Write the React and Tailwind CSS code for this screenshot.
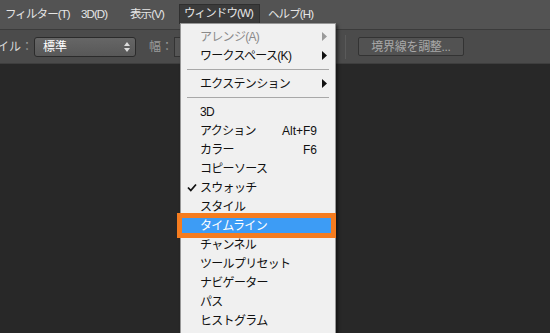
import React from "react";

const font = { fontFamily: '"Liberation Sans", "Noto Sans CJK JP", sans-serif' };

const menuBar = [
  { label: "フィルター(T)", w: "w-[76px]", pl: "pl-[5px]" },
  { label: "3D(D)", w: "w-[49px]", pl: "pl-[5px]" },
  { label: "表示(V)", w: "w-[54px]", pl: "pl-[5px]" },
  { label: "ウィンドウ(W)", w: "w-[81px]", pl: "pl-0", active: true },
  { label: "ヘルプ(H)", w: "w-[80px]", pl: "pl-[8px]" },
];

const Arrow = ({ gray }) => (
  <svg width="5" height="9" viewBox="0 0 5 9" className="mr-[8px]">
    <path d="M0 0 L5 4.5 L0 9 Z" fill={gray ? "#9a9a9a" : "#111"} />
  </svg>
);

const Check = () => (
  <svg width="10" height="9" viewBox="0 0 10 9" className="absolute left-[6px] top-[5px]">
    <path d="M1 4.5 L3.8 7.5 L9 1.5" stroke="#111" strokeWidth="1.8" fill="none" />
  </svg>
);

const Row = ({ label, shortcut, arrow, disabled, checked, selected }) => (
  <div
    className={
      "relative h-[19px] flex items-center justify-between pl-[19px] text-[12px] tracking-[-0.7px] whitespace-nowrap " +
      (selected ? "text-white" : disabled ? "text-[#8a8a8a]" : "text-[#111]")
    }
  >
    {checked && <Check />}
    <span>{label}</span>
    {shortcut && <span className="mr-[18px] tracking-normal">{shortcut}</span>}
    {arrow && <Arrow gray={disabled} />}
  </div>
);

const Sep = () => (
  <div className="h-[9px] flex items-center px-[6px]">
    <div className="h-px w-full bg-[#a8a8a8]" />
  </div>
);

export default function App() {
  return (
    <div
      className="relative w-[550px] h-[333px] overflow-hidden bg-[#282828]"
      style={font}
    >
      {/* menu bar */}
      <div className="h-[30px] bg-[#535353] border-b border-[#3b3b3b] flex items-center text-[11.5px] text-[#e6e6e6] tracking-[-0.9px] whitespace-nowrap">
        {menuBar.map((m) => (
          <div key={m.label} className={m.w + " " + m.pl + " shrink-0 h-[30px] flex items-center"}>
            {m.active ? (
              <div className="h-[20px] mt-[-2px] w-full bg-[#3b3b3b] border border-[#2f2f2f] flex items-center pl-[4px]">
                {m.label}
              </div>
            ) : (
              m.label
            )}
          </div>
        ))}
      </div>

      {/* options bar */}
      <div className="h-[34px] bg-[#4b4b4b] border-b border-[#3e3e3e] flex items-center text-[12px] whitespace-nowrap">
        <span className="text-[#d8d8d8] ml-[-3px] w-[37px] shrink-0">
          イル<span className="text-[#9a9a9a]">：</span>
        </span>
        <div className="w-[102px] shrink-0 h-[20px] rounded-[3px] border border-[#2b2b2b] bg-gradient-to-b from-[#666] to-[#585858] flex items-center justify-between pl-[8px] pr-[5px] text-white">
          <span>標準</span>
          <svg width="6" height="10" viewBox="0 0 6 10">
            <path d="M0 4 L3 0 L6 4 Z M0 6 L3 10 L6 6 Z" fill="#ddd" />
          </svg>
        </div>
        <span className="ml-[13px] text-[#9a9a9a] w-[25px] shrink-0">幅：</span>
        <div className="w-[20px] h-[20px] shrink-0 border border-[#333] bg-[#555]" />
        <div className="ml-[151px] w-px h-[24px] shrink-0 bg-[#333] border-r border-[#5a5a5a]" />
        <div className="ml-[12px] w-[106px] h-[19px] shrink-0 rounded-[2px] border border-[#333] bg-[#525252] flex items-center justify-center text-[#a8a8a8] tracking-[-0.3px]">
          境界線を調整...
        </div>
      </div>

      {/* dropdown */}
      <div className="absolute left-[180px] top-[23px] w-[156px] bottom-[-2px] bg-[#f0f0f0] border border-[#979797] shadow-[2px_2px_3px_rgba(0,0,0,0.5)] pt-[3px]">
        <Row label="アレンジ(A)" arrow disabled />
        <Row label="ワークスペース(K)" arrow />
        <Sep />
        <Row label="エクステンション" arrow />
        <Sep />
        <Row label="3D" />
        <Row label="アクション" shortcut="Alt+F9" />
        <Row label="カラー" shortcut="F6" />
        <Row label="コピーソース" />
        <Row label="スウォッチ" checked />
        <Row label="スタイル" />
        <div className="relative">
          <div className="absolute left-[-4px] right-[-1px] top-[-3px] bottom-[-3px] border-[5px] border-[#f57c1f] bg-[#3d9cf5]" />
          <Row label="タイムライン" selected />
        </div>
        <Row label="チャンネル" />
        <Row label="ツールプリセット" />
        <Row label="ナビゲーター" />
        <Row label="パス" />
        <Row label="ヒストグラム" />
      </div>
    </div>
  );
}
